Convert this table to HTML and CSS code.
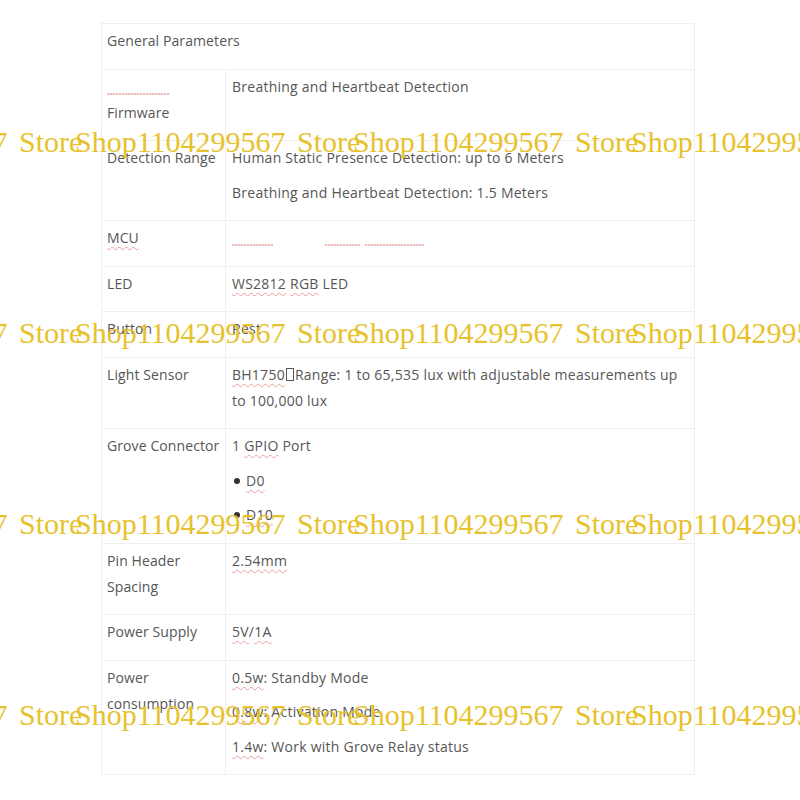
FILE: index.html
```html
<!DOCTYPE html>
<html>
<head>
<meta charset="utf-8">
<link rel="stylesheet" href="styles.css">
</head>
<body>
<div class="page">
  <table class="spec">
    <colgroup><col class="c-key"><col class="c-val"></colgroup>
    <tr><td colspan="2" class="k"><p>General Parameters</p></td></tr>
    <tr>
      <td class="k"><p><span class="sq" style="width:63px"></span><br>Firmware</p></td>
      <td class="v"><p>Breathing and Heartbeat Detection</p></td>
    </tr>
    <tr>
      <td class="k"><p class="nw">Detection Range</p></td>
      <td class="v"><p>Human Static Presence Detection: up to 6 Meters</p><p>Breathing and Heartbeat Detection: 1.5 Meters</p></td>
    </tr>
    <tr>
      <td class="k"><p><span class="w">MCU</span></p></td>
      <td class="v"><p><span class="sq" style="width:41px"></span><span class="sq" style="width:35px;margin-left:52px"></span><span class="sq" style="width:59px;margin-left:5px"></span></p></td>
    </tr>
    <tr>
      <td class="k"><p>LED</p></td>
      <td class="v"><p><span class="w">WS2812</span> <span class="w">RGB</span> LED</p></td>
    </tr>
    <tr>
      <td class="k"><p>Button</p></td>
      <td class="v"><p>Rest</p></td>
    </tr>
    <tr>
      <td class="k"><p>Light Sensor</p></td>
      <td class="v"><p><span class="w">BH1750</span><span class="tofu"></span>Range: 1 to 65,535 lux with adjustable measurements up to 100,000 lux</p></td>
    </tr>
    <tr>
      <td class="k"><p class="nw">Grove Connector</p></td>
      <td class="v"><p>1 <span class="w">GPIO</span> Port</p><p><span class="dot"></span><span class="w">D0</span></p><p><span class="dot"></span><span class="w">D10</span></p></td>
    </tr>
    <tr>
      <td class="k"><p>Pin Header Spacing</p></td>
      <td class="v"><p><span class="w">2.54mm</span></p></td>
    </tr>
    <tr>
      <td class="k"><p>Power Supply</p></td>
      <td class="v"><p><span class="w">5V</span>/<span class="w">1A</span></p></td>
    </tr>
    <tr>
      <td class="k"><p>Power consumption</p></td>
      <td class="v"><p><span class="w">0.5w</span>: Standby Mode</p><p><span class="w">0.8w</span>: Activation Mode</p><p><span class="w">1.4w</span>: Work with Grove Relay status</p></td>
    </tr>
  </table>

  <div class="watermark">
    <div class="wm-row"><span>Shop1104299567 Store</span><span>Shop1104299567 Store</span><span>Shop1104299567 Store</span><span>Shop1104299567 Store</span></div>
    <div class="wm-row"><span>Shop1104299567 Store</span><span>Shop1104299567 Store</span><span>Shop1104299567 Store</span><span>Shop1104299567 Store</span></div>
    <div class="wm-row"><span>Shop1104299567 Store</span><span>Shop1104299567 Store</span><span>Shop1104299567 Store</span><span>Shop1104299567 Store</span></div>
    <div class="wm-row"><span>Shop1104299567 Store</span><span>Shop1104299567 Store</span><span>Shop1104299567 Store</span><span>Shop1104299567 Store</span></div>
  </div>
</div>
</body>
</html>
```

FILE: styles.css
```css
html, body {
  margin: 0;
  padding: 0;
  background: #ffffff;
}

.page {
  position: relative;
  width: 800px;
  height: 800px;
  overflow: hidden;
  padding: 23px 0 0 101px;
  box-sizing: border-box;
  font-family: "Open Sans", "Noto Sans", sans-serif;
  font-size: 14px;
  color: #565656;
}

.spec {
  width: 594px;
  border-collapse: collapse;
  table-layout: fixed;
  border: 1px solid #efefef;
}

.c-key { width: 124px; }

.spec td {
  border: 1px solid #efefef;
  vertical-align: top;
  padding: 4px 6px 6px 6px;
}

.spec td.k {
  padding-left: 5px;
  padding-right: 2px;
  letter-spacing: 0.1px;
}

.spec td.v {
  padding-left: 6px;
  letter-spacing: 0.25px;
}

.spec p {
  margin: 0 0 8.5px 0;
  line-height: 26px;
}

.spec p.nw {
  white-space: nowrap;
}

.w {
  text-decoration: underline wavy rgba(214, 70, 70, 0.5);
  text-decoration-thickness: 1px;
  text-underline-offset: 3px;
}

.sq {
  display: inline-block;
  height: 2px;
  vertical-align: baseline;
  position: relative;
  top: 3px;
  background: repeating-linear-gradient(90deg, rgba(214, 90, 90, 0.4) 0 2px, rgba(214, 90, 90, 0.18) 2px 3px);
}

.tofu {
  display: inline-block;
  width: 6px;
  height: 11px;
  border: 1px solid #565656;
  vertical-align: -1px;
  margin: 0 1px 0 1px;
}

.dot {
  display: inline-block;
  width: 6px;
  height: 6px;
  border-radius: 50%;
  background: #333;
  vertical-align: middle;
  margin: 0 6px 2px 2px;
}

.watermark {
  position: absolute;
  left: 0;
  top: 0;
  width: 800px;
  height: 800px;
  pointer-events: none;
  display: flex;
  flex-direction: column;
  padding-top: 127px;
  row-gap: 161px;
  box-sizing: border-box;
  font-family: "Liberation Serif", "Times New Roman", serif;
  font-size: 30px;
  line-height: 30px;
  word-spacing: 4px;
  color: #e8c22c;
}

.wm-row {
  display: flex;
  margin-left: -203px;
  white-space: nowrap;
}

.wm-row span {
  flex: 0 0 278px;
  width: 278px;
  overflow: visible;
}
```
